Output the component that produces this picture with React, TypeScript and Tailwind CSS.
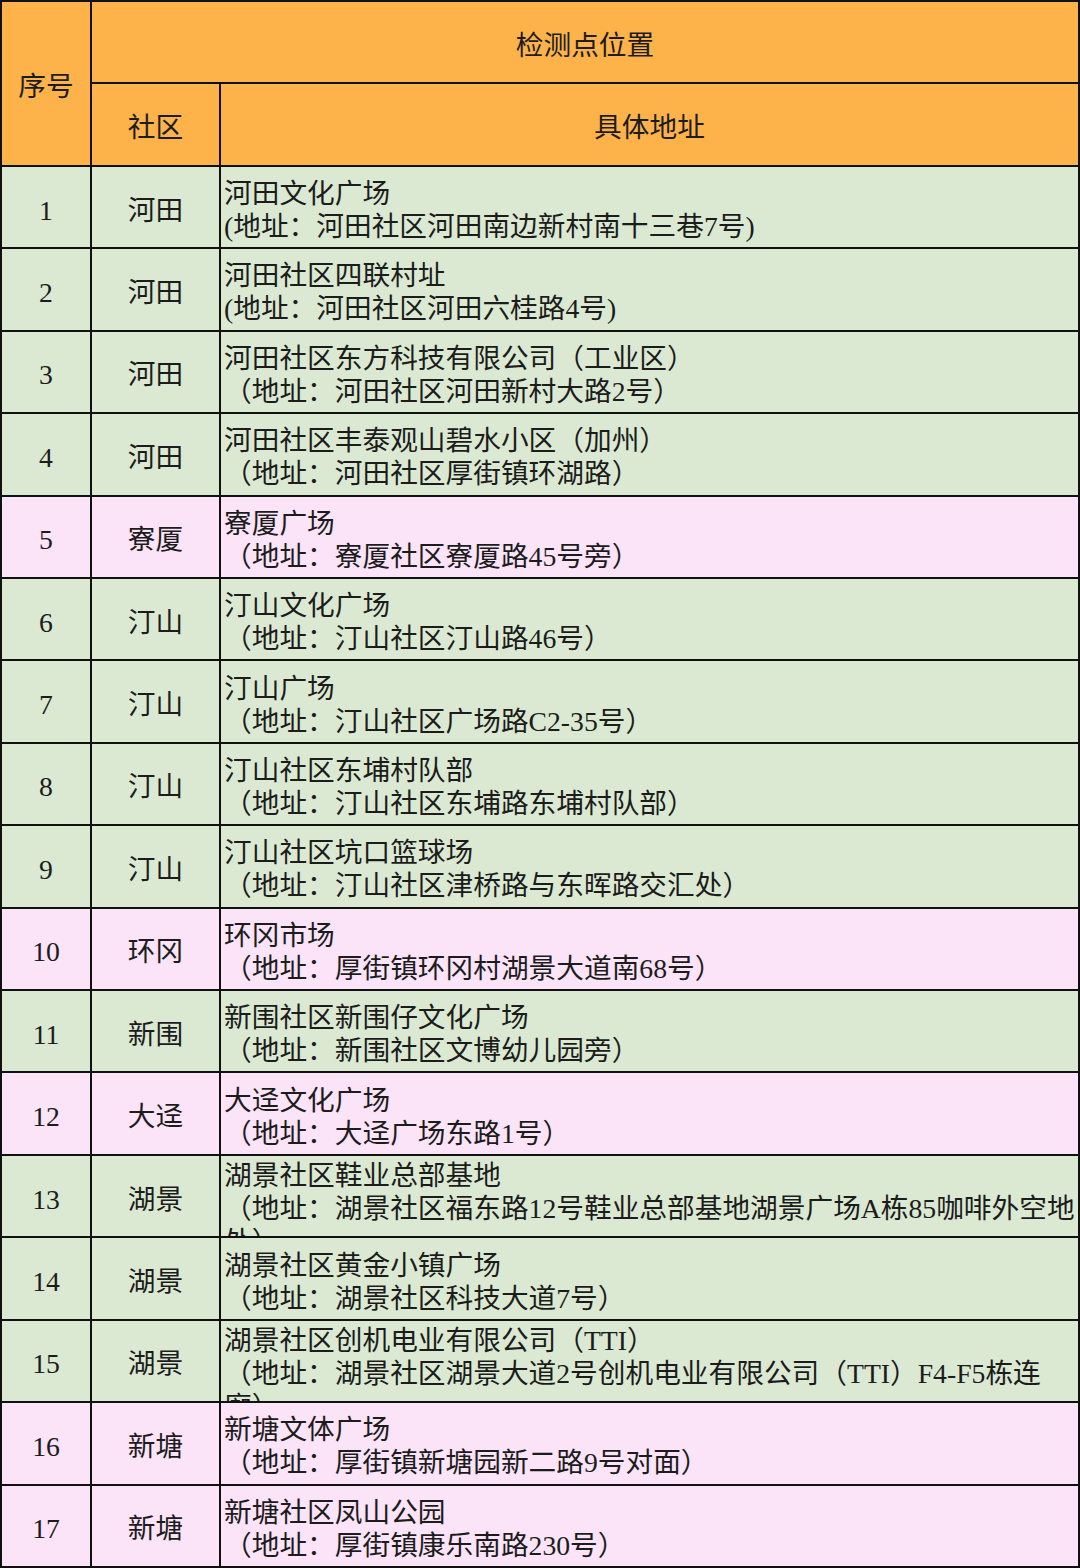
const rows: { no: number; area: string; title: string; addr: string; pink?: boolean; top?: boolean }[] = [
  { no: 1, area: '河田', title: '河田文化广场', addr: '(地址：河田社区河田南边新村南十三巷7号)' },
  { no: 2, area: '河田', title: '河田社区四联村址', addr: '(地址：河田社区河田六桂路4号)' },
  { no: 3, area: '河田', title: '河田社区东方科技有限公司（工业区）', addr: '（地址：河田社区河田新村大路2号）' },
  { no: 4, area: '河田', title: '河田社区丰泰观山碧水小区（加州）', addr: '（地址：河田社区厚街镇环湖路）' },
  { no: 5, area: '寮厦', title: '寮厦广场', addr: '（地址：寮厦社区寮厦路45号旁）', pink: true },
  { no: 6, area: '汀山', title: '汀山文化广场', addr: '（地址：汀山社区汀山路46号）' },
  { no: 7, area: '汀山', title: '汀山广场', addr: '（地址：汀山社区广场路C2-35号）' },
  { no: 8, area: '汀山', title: '汀山社区东埔村队部', addr: '（地址：汀山社区东埔路东埔村队部）' },
  { no: 9, area: '汀山', title: '汀山社区坑口篮球场', addr: '（地址：汀山社区津桥路与东晖路交汇处）' },
  { no: 10, area: '环冈', title: '环冈市场', addr: '（地址：厚街镇环冈村湖景大道南68号）', pink: true },
  { no: 11, area: '新围', title: '新围社区新围仔文化广场', addr: '（地址：新围社区文博幼儿园旁）' },
  { no: 12, area: '大迳', title: '大迳文化广场', addr: '（地址：大迳广场东路1号）', pink: true },
  { no: 13, area: '湖景', title: '湖景社区鞋业总部基地', addr: '（地址：湖景社区福东路12号鞋业总部基地湖景广场A栋85咖啡外空地处）', top: true },
  { no: 14, area: '湖景', title: '湖景社区黄金小镇广场', addr: '（地址：湖景社区科技大道7号）' },
  { no: 15, area: '湖景', title: '湖景社区创机电业有限公司（TTI）', addr: '（地址：湖景社区湖景大道2号创机电业有限公司（TTI）F4-F5栋连廊）', top: true },
  { no: 16, area: '新塘', title: '新塘文体广场', addr: '（地址：厚街镇新塘园新二路9号对面）', pink: true },
  { no: 17, area: '新塘', title: '新塘社区凤山公园', addr: '（地址：厚街镇康乐南路230号）', pink: true },
];

const font = { fontFamily: '"Liberation Serif", "Noto Sans CJK SC", serif' };

export default function App() {
  return (
    <div
      className="grid h-[1568px] w-[1080px] grid-cols-[88px_127px_1fr] grid-rows-[repeat(19,minmax(0,1fr))] gap-[2px] bg-[#111] p-[2px] text-[27.7px] leading-[33px] text-[#1c1c1c]"
      style={font}
    >
      <div className="row-span-2 flex items-center justify-center bg-[#fdb24a] pt-[6px]">序号</div>
      <div className="col-span-2 flex items-center justify-center bg-[#fdb24a] pt-[6px]">检测点位置</div>
      <div className="flex items-center justify-center bg-[#fdb24a] pt-[6px]">社区</div>
      <div className="flex items-center justify-center bg-[#fdb24a] pt-[6px]">具体地址</div>
      {rows.map((r) => {
        const bg = r.pink ? 'bg-[#fbe3f8]' : 'bg-[#dbe9d3]';
        return [
          <div key={`n${r.no}`} className={`flex items-center justify-center pt-[6px] ${bg}`}>{r.no}</div>,
          <div key={`a${r.no}`} className={`flex items-center justify-center pt-[6px] ${bg}`}>{r.area}</div>,
          <div
            key={`d${r.no}`}
            className={`flex flex-col overflow-hidden pl-[3px] ${r.top ? 'justify-start pt-[3px]' : 'justify-center pt-[6px]'} ${bg}`}
          >
            <div className="whitespace-nowrap">{r.title}</div>
            <div>{r.addr}</div>
          </div>,
        ];
      })}
    </div>
  );
}
